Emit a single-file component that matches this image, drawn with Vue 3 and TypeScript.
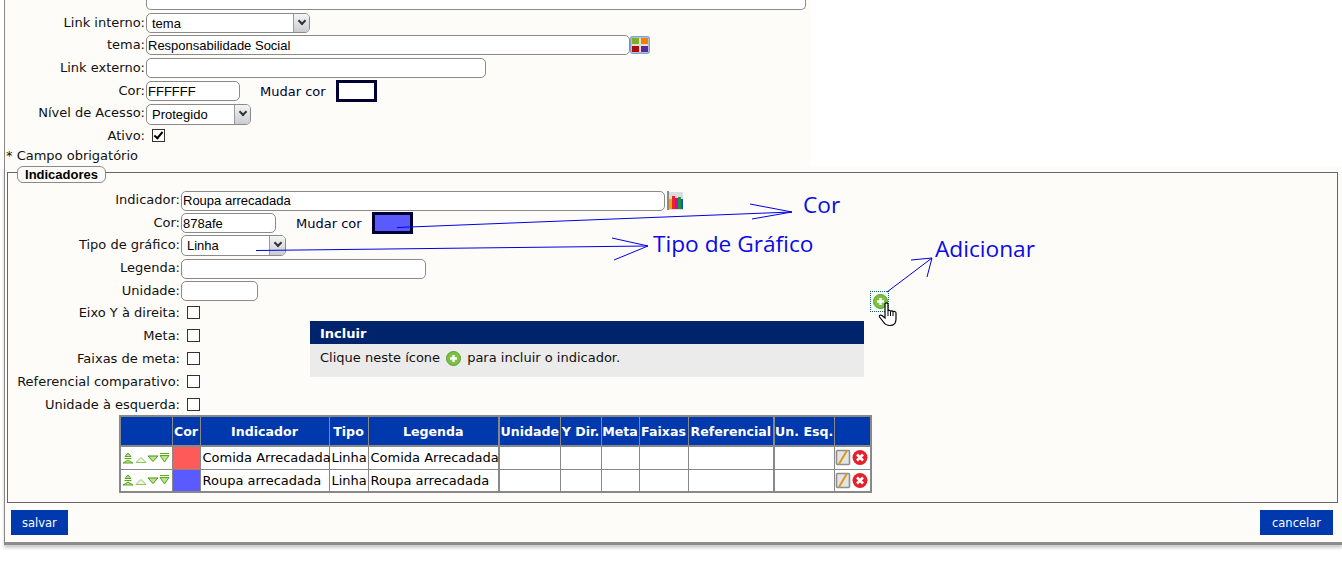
<script setup lang="ts">
interface Row { name: string; color: string }
const rows: Row[] = [
  { name: 'Comida Arrecadada', color: '#ff5a5a' },
  { name: 'Roupa arrecadada', color: '#5a5aff' },
]
const heads = ['', 'Cor', 'Indicador', 'Tipo', 'Legenda', 'Unidade', 'Y Dir.', 'Meta', 'Faixas', 'Referencial', 'Un. Esq.', '']
const widths = [52, 28, 129, 39, 131, 61, 41, 38, 49, 86, 60, 37]
const checks = ['Eixo Y à direita:', 'Meta:', 'Faixas de meta:', 'Referencial comparativo:', 'Unidade à esquerda:']
</script>

<template>
  <div class="page">
    <section class="top">
      <input class="field clip" type="text" />
      <div class="row h22 mt2">
        <label class="lab">Link interno:</label>
        <div class="sel w164"><select><option>tema</option></select><span class="arrow"><i></i></span></div>
      </div>
      <div class="row h22">
        <label class="lab">tema:</label>
        <input class="field w484" type="text" value="Responsabilidade Social" />
        <svg class="palette" width="20" height="18" viewBox="0 0 20 18">
          <rect x="0.75" y="0.75" width="18.5" height="16.5" rx="2" fill="#e3dcd8" stroke="#7ea3d2" stroke-width="1.5" />
          <rect x="2" y="2" width="7" height="6" fill="#7fb022" />
          <rect x="11" y="2" width="7" height="6" fill="#f58000" />
          <rect x="2" y="10" width="7" height="6" fill="#b00c0c" />
          <rect x="11" y="10" width="7" height="6" fill="#5a2a96" />
        </svg>
      </div>
      <div class="row h24">
        <label class="lab">Link externo:</label>
        <input class="field w340" type="text" />
      </div>
      <div class="row h22">
        <label class="lab">Cor:</label>
        <input class="field w94" type="text" value="FFFFFF" />
        <span class="mudar">Mudar cor</span>
        <span class="swatch white"></span>
      </div>
      <div class="row h24">
        <label class="lab up">Nível de Acesso:</label>
        <div class="sel w105"><select><option>Protegido</option></select><span class="arrow"><i></i></span></div>
      </div>
      <div class="row h18">
        <label class="lab">Ativo:</label>
        <input class="check" type="checkbox" checked />
      </div>
      <p class="req">* Campo obrigatório</p>
    </section>

    <section class="lower">
      <div class="fieldset">
        <div class="legend">Indicadores</div>

        <div class="row h23">
          <label class="lab wide">Indicador:</label>
          <input class="field w484" type="text" value="Roupa arrecadada" />
          <svg class="chart" width="17" height="20" viewBox="0 0 17 20">
            <rect x="1" y="1" width="15" height="18" fill="#dcdcdc" />
            <rect x="0" y="0" width="2" height="19" fill="#8a8a8a" />
            <rect x="2" y="8" width="3" height="10" fill="#f7a600" />
            <rect x="5" y="5" width="3" height="13" fill="#e8262a" />
            <rect x="8" y="7" width="3" height="11" fill="#d600b8" />
            <rect x="11" y="6" width="3" height="12" fill="#0f9b35" />
            <rect x="14" y="8" width="2" height="10" fill="#1d4fd0" />
          </svg>
        </div>
        <div class="row h22">
          <label class="lab wide">Cor:</label>
          <input class="field w95" type="text" value="878afe" />
          <span class="mudar">Mudar cor</span>
          <span class="swatch blue"></span>
        </div>
        <div class="row h23">
          <label class="lab wide">Tipo de gráfico:</label>
          <div class="sel w105"><select><option>Linha</option></select><span class="arrow"><i></i></span></div>
        </div>
        <div class="row h23">
          <label class="lab wide">Legenda:</label>
          <input class="field w245" type="text" />
        </div>
        <div class="row h21">
          <label class="lab wide flat">Unidade:</label>
          <input class="field w77" type="text" />
        </div>
        <div v-for="c in checks" :key="c" class="row h23">
          <label class="lab wide flat">{{ c }}</label>
          <input class="check" type="checkbox" />
        </div>

        <table class="grid">
          <colgroup>
            <col v-for="(w, i) in widths" :key="i" :style="{ width: w + 'px' }" />
          </colgroup>
          <thead>
            <tr><th v-for="(h, i) in heads" :key="i">{{ h }}</th></tr>
          </thead>
          <tbody>
            <tr v-for="r in rows" :key="r.name">
              <td class="moves">
                <svg width="48" height="12" viewBox="0 0 48 12">
                  <g fill="#b9e58a" stroke="#5aa51e" stroke-width="1">
                    <path d="M6 1 L9 4.5 L3 4.5 Z" />
                    <path d="M2.5 6.5 H9.5" fill="none" />
                    <path d="M1 11 L6 8 L11 11 Z" />
                    <path d="M14 10.5 L19 5.5 L24 10.5 Z" fill="#eef8e0" stroke="#8cc85a" />
                    <path d="M26 4 L36 4 L31 9.5 Z" stroke="#4a8f18" />
                    <path d="M38 1.5 H47" fill="none" />
                    <path d="M38 3.5 L47 3.5 L42.5 10 Z" />
                  </g>
                </svg>
              </td>
              <td :style="{ background: r.color }"></td>
              <td>{{ r.name }}</td>
              <td>Linha</td>
              <td>{{ r.name }}</td>
              <td></td><td></td><td></td><td></td><td></td><td></td>
              <td class="acts">
                <svg width="34" height="17" viewBox="0 0 34 17">
                  <rect x="1.5" y="1.5" width="13" height="14" rx="1" fill="#e4e4e4" stroke="#8f8f8f" stroke-width="1.6" />
                  <path d="M12 1.5 L4 15" stroke="#d99a1c" stroke-width="2" fill="none" />
                  <circle cx="25" cy="8.5" r="7.5" fill="#e5202a" />
                  <path d="M22 5.5 L28 11.5 M28 5.5 L22 11.5" stroke="#fff" stroke-width="2.6" />
                </svg>
              </td>
            </tr>
          </tbody>
        </table>
      </div>
      <div class="actions">
        <button class="btn salvar" type="button">salvar</button>
        <button class="btn" type="button">cancelar</button>
      </div>
    </section>

    <div class="tip">
      <div class="tip-head">Incluir</div>
      <div class="tip-body">
        Clique neste ícone
        <svg class="plus" width="15" height="15" viewBox="0 0 15 15">
          <circle cx="7.5" cy="7.5" r="7" fill="#7cc242" stroke="#5d9e2d" />
          <path d="M7.5 4 V11 M4 7.5 H11" stroke="#fff" stroke-width="2.4" />
        </svg>
        para incluir o indicador.
      </div>
    </div>

    <div class="add">
      <svg width="15" height="15" viewBox="0 0 15 15">
        <circle cx="7.5" cy="7.5" r="7" fill="#7cc242" stroke="#5d9e2d" />
        <path d="M7.5 4 V11 M4 7.5 H11" stroke="#fff" stroke-width="2.4" />
      </svg>
    </div>
    <svg class="hand" width="20" height="25" viewBox="0 0 20 25">
      <path d="M7 2 C7 0.6 10 0.6 10 2 V9 C10 8 12.5 8 12.5 9.5 C13 8.5 15 8.7 15 10 C15.5 9 18 9.3 18 11 V17 C18 21 16 23.5 12 23.5 C9 23.5 7 22.5 5.5 20 L1.5 15 C0.8 13.5 2.5 12.5 4 13.5 L7 16 Z" fill="#fff" stroke="#000" stroke-width="1.2" />
      <path d="M10 9 V14 M12.5 9.5 V14 M15 10 V14" stroke="#000" stroke-width="1" fill="none" />
    </svg>

    <svg class="notes" width="1342" height="562" viewBox="0 0 1342 562">
      <g fill="none" stroke="#0000e6" stroke-width="1">
        <path d="M397 227.5 L792 212 M750 204 L792 212 L752 219" />
        <path d="M256 250.5 L648 246 M612 238 L648 246 L614 260" />
        <path d="M887 292 L932 258 M911 260 L932 258 L927 277" />
      </g>
    </svg>
    <span class="note n1">Cor</span>
    <span class="note n2">Tipo de Gráfico</span>
    <span class="note n3">Adicionar</span>
  </div>
</template>

<style>
html, body { background: #fff; margin: 0; }
</style>

<style scoped>
.page {
  position: relative;
  width: 1342px;
  height: 562px;
  overflow: hidden;
  font-family: "DejaVu Sans", Verdana, sans-serif;
  font-size: 13px;
  color: #111;
}
.top {
  width: 806px;
  height: 166px;
  margin-left: 4px;
  background: #fdfcf8;
  border-left: 1px solid #888;
}
.lower {
  height: 376px;
  margin-left: 4px;
  background: #fdfcf8;
  border-left: 1px solid #888;
  border-bottom: 3px solid #8c8c8c;
  box-shadow: 0 3px 3px #ccc;
  display: flex;
  flex-direction: column;
}
.row { display: flex; align-items: center; }
.h18 { height: 18px; }
.h21 { height: 21px; }
.h22 { height: 22px; }
.h23 { height: 23px; }
.h24 { height: 24px; }
.mt2 { margin-top: 2px; }
.lab {
  display: block;
  width: 140px;
  margin-right: 1px;
  text-align: right;
  white-space: nowrap;
  position: relative;
  top: -1px;
}
.lab.wide { width: 172px; }
.lab.up { top: -2px; }
.lab.flat { top: 0; }
.h18 .lab { top: 0; }
.field {
  box-sizing: border-box;
  height: 20px;
  padding: 0 1px;
  background: #fff;
  border: 1px solid #8a8a8a;
  border-radius: 5px;
  font: 13px "Liberation Sans", Arial, sans-serif;
  color: #000;
  outline: none;
}
.clip {
  display: block;
  width: 660px;
  height: 10px;
  margin-left: 141px;
  border-top: 0;
  border-radius: 0 0 5px 5px;
}
.w484 { width: 484px; }
.w340 { width: 340px; }
.w245 { width: 245px; }
.w95 { width: 95px; }
.w94 { width: 94px; }
.w77 { width: 77px; }
.sel { position: relative; height: 21px; box-sizing: border-box; }
.w164 { width: 164px; height: 20px; }
.w105 { width: 105px; }
.sel select {
  appearance: none;
  box-sizing: border-box;
  width: 100%;
  height: 100%;
  padding: 0 0 0 5px;
  background: #fff;
  border: 1px solid #8a8a8a;
  border-radius: 5px;
  font: 13px "Liberation Sans", Arial, sans-serif;
  color: #000;
}
.arrow {
  position: absolute;
  top: 1px;
  right: 1px;
  bottom: 1px;
  width: 16px;
  box-sizing: border-box;
  border-left: 1px solid #9a9a9a;
  border-radius: 0 4px 4px 0;
  background: linear-gradient(#f4f4f4, #c9cdd2);
}
.arrow i {
  position: absolute;
  left: 5px;
  top: 4px;
  width: 4px;
  height: 4px;
  border-right: 2px solid #333;
  border-bottom: 2px solid #333;
  transform: rotate(45deg);
}
.chart { margin-left: 2px; }
.mudar { margin: 0 10px 0 20px; color: #000033; }
.swatch {
  box-sizing: border-box;
  width: 41px;
  height: 22px;
  border: 3px solid #000033;
}
.swatch.white { background: #fff; }
.swatch.blue { background: #5a5aff; }
.check {
  appearance: none;
  position: relative;
  box-sizing: border-box;
  width: 13px;
  height: 13px;
  margin: 0 0 0 6px;
  background: #fff;
  border: 1px solid #333;
}
.check:checked::after {
  content: "";
  position: absolute;
  left: 3px;
  top: 0;
  width: 3px;
  height: 7px;
  border-right: 2px solid #000;
  border-bottom: 2px solid #000;
  transform: rotate(40deg);
}
.req { margin: 4px 0 0 1px; line-height: 16px; }
.fieldset {
  position: relative;
  box-sizing: border-box;
  height: 331px;
  margin: 6px 4px 0 2px;
  padding-top: 16px;
  border: 1px solid #666;
}
.legend {
  position: absolute;
  left: 9px;
  top: -7px;
  box-sizing: border-box;
  width: 89px;
  height: 17px;
  background: #fdfcf8;
  border: 1px solid #8a8a8a;
  border-radius: 6px;
  font: 700 13px/15px "Liberation Sans", Arial, sans-serif;
  text-align: center;
  color: #000;
}
.grid {
  table-layout: fixed;
  width: 751px;
  margin: -1px 0 0 111px;
  border-collapse: collapse;
  border: 2px solid #888;
  background: #fff;
  font-size: 13px;
}
.grid th {
  height: 28px;
  padding: 0;
  background: #0038ad;
  border: 1px solid #888;
  border-bottom-width: 2px;
  color: #fff;
  font-size: 12.6px;
  font-weight: 700;
  white-space: nowrap;
}
.grid td {
  height: 21.5px;
  padding: 0 0 0 2px;
  border: 1px solid #888;
  white-space: nowrap;
  color: #000;
}
.grid th:nth-child(6), .grid td:nth-child(6),
.grid th:nth-child(11), .grid td:nth-child(11) { border-left-width: 2px; }
.grid .moves { padding: 0 0 0 1px; line-height: 0; }
.grid .moves svg { vertical-align: middle; }
.grid .acts { padding: 0; line-height: 0; }
.grid .acts svg { vertical-align: middle; }
.actions {
  display: flex;
  justify-content: space-between;
  padding: 7px 9px 0 6px;
}
.btn {
  height: 25px;
  padding: 0 12px;
  background: #0038ad;
  border: 0;
  color: #fff;
  font: 11.5px "DejaVu Sans", Verdana, sans-serif;
}
.btn.salvar { padding: 0 11px; }
.tip {
  position: absolute;
  left: 310px;
  top: 321px;
  width: 554px;
  height: 56px;
  background: #ebebeb;
}
.tip-head {
  height: 23px;
  padding-left: 10px;
  background: #00246b;
  color: #fff;
  font-weight: 700;
  line-height: 25px;
}
.tip-body {
  display: flex;
  align-items: center;
  gap: 6px;
  padding: 5px 0 0 10px;
  line-height: 18px;
}
.add {
  position: absolute;
  left: 870px;
  top: 291px;
  box-sizing: border-box;
  width: 19px;
  height: 21px;
  padding: 2px;
  border: 1px dotted #0b6e6e;
}
.add svg { display: block; }
.hand { position: absolute; left: 878px; top: 302px; }
.notes { position: absolute; left: 0; top: 0; pointer-events: none; }
.note {
  position: absolute;
  font-family: "Open Sans", sans-serif;
  font-size: 22.7px;
  line-height: 30px;
  color: #0a0ae6;
  white-space: nowrap;
}
.n1 { left: 803px; top: 190px; }
.n2 { left: 653px; top: 229px; }
.n3 { left: 935px; top: 234px; }
</style>
